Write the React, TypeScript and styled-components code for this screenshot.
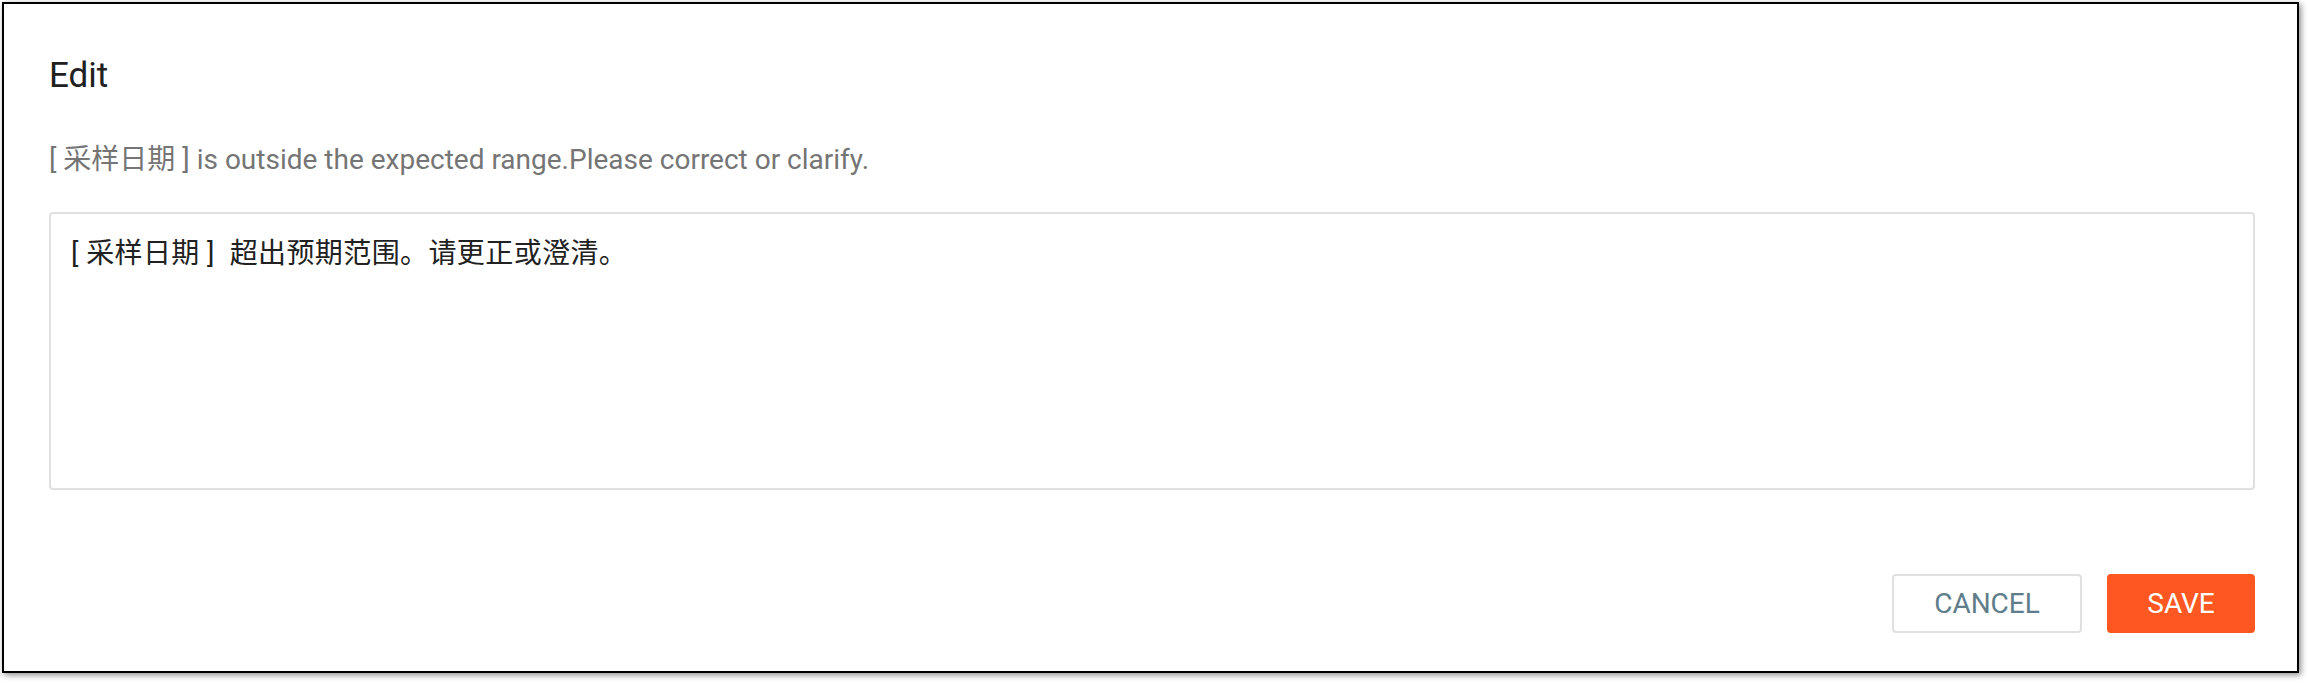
import React from "react";
import styled, { createGlobalStyle } from "styled-components";

const GlobalStyle = createGlobalStyle`
  html, body {
    margin: 0;
    padding: 0;
    background: #ffffff;
  }
  * {
    box-sizing: border-box;
  }
`;

const FONT = `Roboto, "Noto Sans CJK SC", "Liberation Sans", sans-serif`;

const Page = styled.div`
  padding: 2px 0 0 2px;
  width: 2308px;
  height: 684px;
`;

const Dialog = styled.div`
  display: flex;
  flex-direction: column;
  width: 2297px;
  height: 671px;
  padding: 54px 42px 38px 45px;
  background: #ffffff;
  border: 2px solid #000000;
  box-shadow: 2px 2px 6px rgba(0, 0, 0, 0.45);
  font-family: ${FONT};
`;

const Title = styled.h2`
  margin: 0;
  font-size: 35px;
  line-height: 1;
  font-weight: 400;
  color: #212121;
`;

const Message = styled.p`
  margin: 53px 0 0;
  font-size: 28px;
  line-height: 1;
  color: #757575;
`;

const Field = styled.textarea`
  display: block;
  margin-top: 38px;
  width: 100%;
  height: 278px;
  padding: 20px 20px;
  border: 2px solid #e0e0e0;
  border-radius: 4px;
  font-family: ${FONT};
  font-size: 28px;
  line-height: 1.4;
  letter-spacing: 0.4px;
  color: #212121;
  resize: none;
  outline: none;
  background: #ffffff;
`;

const Footer = styled.div`
  display: flex;
  justify-content: flex-end;
  gap: 25px;
  margin-top: auto;
`;

type ButtonProps = {
  $primary?: boolean;
  $width: number;
};

const Button = styled.button<ButtonProps>`
  display: flex;
  align-items: center;
  justify-content: center;
  width: ${(p) => p.$width}px;
  height: 59px;
  padding: 0;
  border: 2px solid ${(p) => (p.$primary ? "#ff5722" : "#e0e0e0")};
  border-radius: 4px;
  background: ${(p) => (p.$primary ? "#ff5722" : "#ffffff")};
  color: ${(p) => (p.$primary ? "#ffffff" : "#607d8b")};
  font-family: ${FONT};
  font-size: 28px;
  font-weight: 400;
  text-transform: uppercase;
  cursor: pointer;
`;

export default function App() {
  return (
    <>
      <GlobalStyle />
      <Page>
        <Dialog>
          <Title>Edit</Title>
          <Message>
            [ 采样日期 ] is outside the expected range.Please correct or
            clarify.
          </Message>
          <Field defaultValue="[ 采样日期 ]  超出预期范围。请更正或澄清。" />
          <Footer>
            <Button $width={190}>Cancel</Button>
            <Button $width={148} $primary>
              Save
            </Button>
          </Footer>
        </Dialog>
      </Page>
    </>
  );
}
